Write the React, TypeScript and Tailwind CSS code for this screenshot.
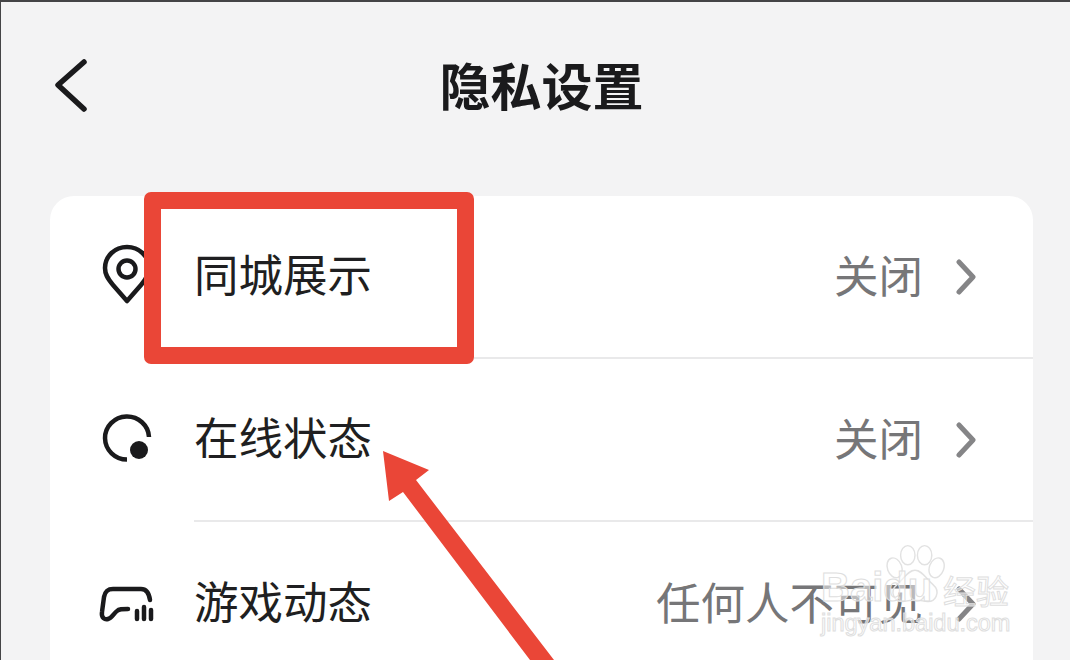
import { ReactNode } from 'react';

type Row = { label: string; value: string; icon: ReactNode; viewBox: string };

const rows: Row[] = [
  {
    label: '同城展示',
    value: '关闭',
    viewBox: '95 242 60 70',
    icon: (
      <>
        <path
          d="M127 300 L113 284 C107 277 105 273 105 267 C105 255 115 246 127 246 C139 246 149 255 149 267 C149 273 147 277 141 284 Z"
          fill="none"
          stroke="#1a1a1c"
          strokeWidth="4.5"
          strokeLinejoin="round"
        />
        <circle cx="127" cy="268" r="8.5" fill="none" stroke="#1a1a1c" strokeWidth="4.5" />
      </>
    ),
  },
  {
    label: '在线状态',
    value: '关闭',
    viewBox: '95 405 60 70',
    icon: (
      <>
        <path
          d="M149 436 A22 21.5 0 1 0 127 458.5"
          fill="none"
          stroke="#1a1a1c"
          strokeWidth="4.5"
        />
        <circle cx="139" cy="449" r="9" fill="#1a1a1c" />
      </>
    ),
  },
  {
    label: '游戏动态',
    value: '任何人不可见',
    viewBox: '95 568 60 70',
    icon: (
      <>
        <path
          d="M150 599 C149 592 146 588 141 588 L113 588 C107 588 105 591 104 596 L102 611 C101 617 105 619 108 618 C112 617 114 612 117 610 C119 608 122 608 128 608"
          fill="none"
          stroke="#1a1a1c"
          strokeWidth="4.5"
          strokeLinecap="round"
        />
        <path
          d="M137 610 V618 M144 606 V618 M151 609 V618"
          fill="none"
          stroke="#1a1a1c"
          strokeWidth="4.5"
          strokeLinecap="round"
        />
      </>
    ),
  },
];

function SettingRow({ row, last }: { row: Row; last: boolean }) {
  return (
    <div className="flex h-[163px] items-stretch">
      <div className="flex w-[144px] shrink-0 items-center pl-[45px]">
        <svg viewBox={row.viewBox} className="h-[70px] w-[60px]">
          {row.icon}
        </svg>
      </div>
      <div
        className={`flex flex-1 items-center justify-between pr-[57px] ${
          last ? '' : 'border-b-2 border-[#e9e9ea]'
        }`}
      >
        <span className="mt-[-6px] text-[44.5px] leading-none text-[#1f1f21]">{row.label}</span>
        <div className="flex items-center gap-[33px]">
          <span className="mt-[-5px] text-[44.5px] leading-none text-[#767678]">{row.value}</span>
          <svg viewBox="0 0 20 36" className="h-[36px] w-[20px]">
            <path
              d="M3 3 L17 18 L3 33"
              fill="none"
              stroke="#858587"
              strokeWidth="5"
              strokeLinecap="round"
              strokeLinejoin="round"
            />
          </svg>
        </div>
      </div>
    </div>
  );
}

export default function App() {
  return (
    <div
      className="relative h-[660px] w-[1070px] overflow-hidden border-t-2 border-l border-[#444446] bg-[#f3f3f4] pr-[37px] pl-[49px]"
      style={{ fontFamily: '"Noto Sans CJK SC", "Noto Sans", sans-serif' }}
    >
      {/* Header */}
      <div className="grid h-[194px] grid-cols-[1fr_auto_1fr] items-start">
        <svg viewBox="0 0 36 56" className="mt-[55px] ml-[3px] h-[56px] w-[36px]">
          <path
            d="M31 5 L5 28 L31 52"
            fill="none"
            stroke="#1a1a1c"
            strokeWidth="5.5"
            strokeLinecap="round"
            strokeLinejoin="round"
          />
        </svg>
        <h1 className="mt-[52px] text-[51px] leading-[60px] font-bold text-[#1a1a1c]">隐私设置</h1>
      </div>

      {/* Settings list */}
      <div className="rounded-t-[24px] bg-white">
        {rows.map((row, i) => (
          <SettingRow key={row.label} row={row} last={i === rows.length - 1} />
        ))}
      </div>

      {/* Annotation: red box */}
      <div className="absolute top-[190px] left-[143px] h-[172px] w-[330px] rounded-[7px] border-[17px] border-[#ea4637]" />

      {/* Annotation: arrow */}
      <svg viewBox="0 0 1070 660" className="absolute top-[-2px] left-[-1px] h-[660px] w-[1070px]">
        <polygon
          points="383,451 429,470 416,480 554,660 530,660 403,492 389,501"
          fill="#ea4637"
        />
      </svg>

      {/* Watermark */}
      <svg viewBox="0 0 100 100" className="absolute top-[541px] left-[884px] h-[64px] w-[60px]">
        <g fill="none" stroke="#e2e2e2" strokeWidth="2.4">
          <ellipse cx="16" cy="38" rx="12" ry="17" transform="rotate(-20 16 38)" />
          <ellipse cx="38" cy="17" rx="12" ry="16" />
          <ellipse cx="66" cy="17" rx="12" ry="16" />
          <ellipse cx="86" cy="38" rx="12" ry="17" transform="rotate(20 86 38)" />
          <path d="M50 42 C38 42 32 56 20 66 C6 78 16 97 32 94 C42 92 58 92 68 94 C84 97 94 78 80 66 C68 56 62 42 50 42 Z" />
        </g>
      </svg>
      <span className="absolute top-[563px] left-[820px] font-['Liberation_Sans',sans-serif] text-[40px] leading-[44px] font-bold text-white/50 [-webkit-text-stroke:1px_#dedede]">
        Baidu
      </span>
      <span className="absolute top-[568px] left-[942px] text-[33px] leading-[40px] text-white/50 [-webkit-text-stroke:1px_#dedede]">
        经验
      </span>
      <span className="absolute top-[607px] left-[820px] font-['Liberation_Sans',sans-serif] text-[23.5px] leading-[28px] text-white/50 [-webkit-text-stroke:1px_#dedede]">
        jingyan.baidu.com
      </span>
    </div>
  );
}
